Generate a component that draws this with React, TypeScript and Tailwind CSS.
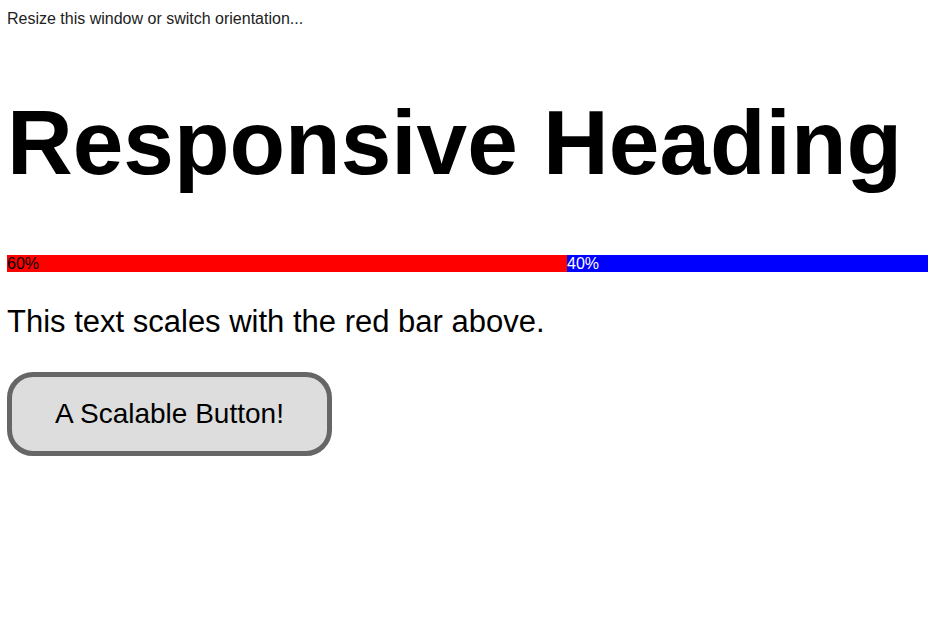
import React from 'react';

const font = { fontFamily: '"Liberation Sans", Arial, sans-serif' };

const SplitBar: React.FC<{ left: number }> = ({ left }) => (
  <div className="flex h-[17px] text-base leading-[17px]">
    <div className="w-[560px] bg-[#ff0000] text-black">{left}%</div>
    <div className="flex-1 bg-[#0000ff] text-white">{100 - left}%</div>
  </div>
);

export default function App() {
  return (
    <div
      style={font}
      className="w-[928px] h-[640px] overflow-hidden bg-white pl-[7px] pt-[10px] text-black font-['Liberation_Sans',Arial,sans-serif]"
    >
      <p className="text-base leading-[18px] text-[#222]">Resize this window or switch orientation...</p>

      <h1 className="mt-[62px] text-[91px] leading-[105px] font-bold">Responsive Heading</h1>

      <div className="mt-[60px]">
        <SplitBar left={60} />
      </div>

      <p className="mt-[32px] text-[31px] leading-[36px]">This text scales with the red bar above.</p>

      <button className="mt-[32px] flex h-[84px] w-[325px] items-center justify-center rounded-[26px] border-[5px] border-[#666666] bg-[#dddddd] text-[28px] leading-8 text-black">
        A Scalable Button!
      </button>
    </div>
  );
}
